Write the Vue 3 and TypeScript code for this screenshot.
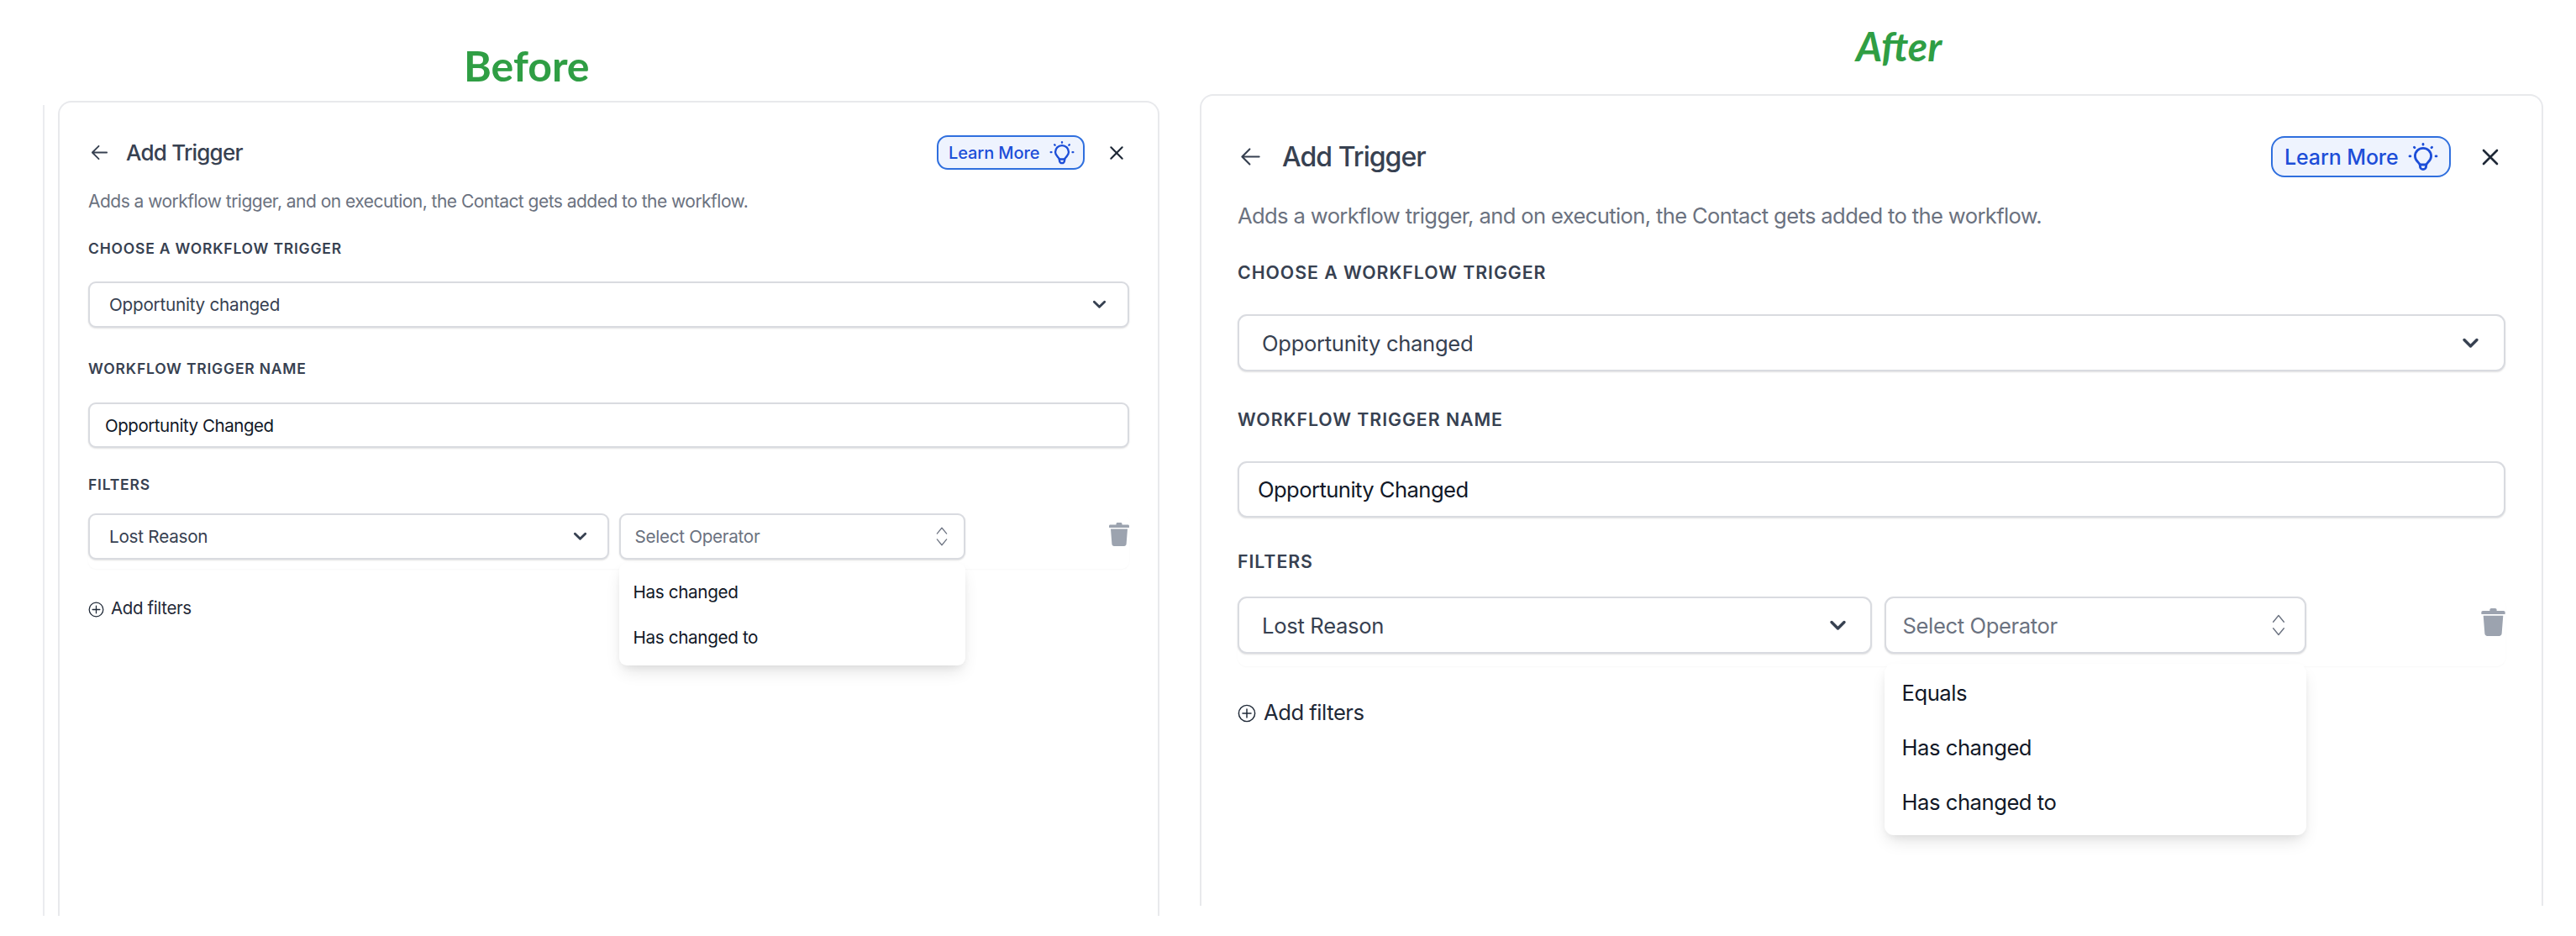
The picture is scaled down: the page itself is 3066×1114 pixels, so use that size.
<script setup lang="ts">
interface Panel {
  key: string
  heading: string
  operators: string[]
}

const panels: Panel[] = [
  { key: 'before', heading: 'Before', operators: ['Has changed', 'Has changed to'] },
  { key: 'after', heading: 'After', operators: ['Equals', 'Has changed', 'Has changed to'] },
]
</script>

<template>
  <div class="page">
    <div class="rail"></div>
    <section v-for="p in panels" :key="p.key" class="panel" :class="p.key">
      <h2 class="heading">{{ p.heading }}</h2>
      <div class="card">
        <header class="top">
          <svg class="back" viewBox="0 0 24 24" fill="none" stroke="#374151" stroke-width="1.9" stroke-linecap="round" stroke-linejoin="round">
            <path d="M21 12H3.5M11 4l-8 8 8 8" />
          </svg>
          <h1 class="title">Add Trigger</h1>
          <button class="learn">
            <span>Learn More</span>
            <svg class="bulb" viewBox="0 0 32 32" fill="none" stroke="#1d4ed8" stroke-width="2.500" stroke-linecap="round" stroke-linejoin="round">
              <path d="M12.400 24c0-2.400-4.900-3.800-4.900-9a8.500 8.500 0 0 1 17 0c0 5.200-4.900 6.600-4.900 9z" />
              <path d="M12.800 24v1.800a3.200 3.200 0 0 0 6.400 0V24" />
              <path d="M16 2.200v.6M6.600 5.600l.5.5M25.400 5.600l-.5.5M1.800 15h.8M29.400 15h.8" />
            </svg>
          </button>
          <svg class="close" viewBox="0 0 24 24" fill="none" stroke="#1f2937" stroke-width="2.600" stroke-linecap="round">
            <path d="M4 4l16 16M20 4L4 20" />
          </svg>
        </header>

        <p class="desc">Adds a workflow trigger, and on execution, the Contact gets added to the workflow.</p>

        <div class="label l-choose">CHOOSE A WORKFLOW TRIGGER</div>
        <div class="field select-main">
          <span class="value">Opportunity changed</span>
          <svg class="chev" viewBox="0 0 20 20" fill="none" stroke="#374151" stroke-width="3" stroke-linecap="round" stroke-linejoin="round">
            <path d="M3.500 6.500L10 13l6.500-6.500" />
          </svg>
        </div>

        <div class="label l-name">WORKFLOW TRIGGER NAME</div>
        <div class="field input-main">Opportunity Changed</div>

        <div class="label l-filters">FILTERS</div>
        <div class="row">
          <div class="field sel-left">
            <span class="value">Lost Reason</span>
            <svg class="chev" viewBox="0 0 20 20" fill="none" stroke="#374151" stroke-width="3" stroke-linecap="round" stroke-linejoin="round">
              <path d="M3.500 6.500L10 13l6.500-6.500" />
            </svg>
          </div>
          <div class="op-wrap">
            <div class="field sel-op">
              <span class="placeholder">Select Operator</span>
              <svg class="updown" viewBox="0 0 14 22" fill="none" stroke="#6b7280" stroke-width="1.100" stroke-linecap="round" stroke-linejoin="round">
                <path d="M2 8l5-6 5 6M2 14l5 6 5-6" />
              </svg>
            </div>
            <ul class="menu">
              <li v-for="o in p.operators" :key="o">{{ o }}</li>
            </ul>
          </div>
          <svg class="trash" viewBox="0 0 24 28" fill="#9ca3af">
            <path d="M8.500 1.500C8.500.7 9.200 0 10 0h4c.8 0 1.500.7 1.500 1.500V2.500h7c.8 0 1.500.7 1.500 1.500v1.500c0 .3-.2.500-.5.500H.5C.2 6 0 5.800 0 5.500V4c0-.8.7-1.500 1.500-1.500h7z" />
            <path d="M2 7.500h20l-1.400 18c-.1 1.400-1.200 2.500-2.600 2.500H6c-1.400 0-2.500-1.100-2.600-2.500z" />
          </svg>
        </div>

        <div class="add">
          <svg class="plus" viewBox="0 0 24 24" fill="none" stroke="#1f2937" stroke-width="1.600" stroke-linecap="round">
            <circle cx="12" cy="12" r="10.500" />
            <path d="M12 6.500v11M6.500 12h11" />
          </svg>
          <span>Add filters</span>
        </div>
      </div>
    </section>
  </div>
</template>

<style>
html,
body {
  margin: 0;
  background: #fff;
  overflow: hidden;
}
</style>

<style scoped>
.page {
  display: flex;
  align-items: flex-start;
  width: 3066px;
  height: 1114px;
  padding-left: 51px;
  box-sizing: border-box;
  font-family: Inter, "Liberation Sans", sans-serif;
  overflow: hidden;
}
.rail {
  width: 2px;
  height: 965px;
  margin: 125px 16px 0 0;
  background: #ebecef;
  flex: none;
}
.panel {
  flex: none;
}
.panel.before {
  width: 1311px;
  margin-right: 48px;
  --head-h: 120px;
  --head-pad: 483px;
  --head-size: 50px;
  --card-h: 970px;
  --pad-x: 34px;
  --pad-t: 39px;
  --btn-h: 41px;
  --btn-w: 176px;
  --btn-size: 20px;
  --btn-pl: 12px;
  --btn-pr: 10px;
  --bulb: 30px;
  --btn-r: 13px;
  --back: 23px;
  --title-gap: 20px;
  --title: 26px;
  --close: 20px;
  --close-gap: 28px;
  --close-end: 5px;
  --desc: 21px;
  --desc-lh: 30px;
  --desc-mt: 23px;
  --lab: 17.500px;
  --lab-lh: 20px;
  --m1: 31px;
  --m2: 29px;
  --m3: 39px;
  --m4: 30px;
  --m5: 34px;
  --m6: 24px;
  --fh: 55px;
  --ih: 54px;
  --val: 20.700px;
  --val-pad: 23px;
  --inp-pad: 18px;
  --inp: 20.500px;
  --chev: 19px;
  --chev-end: 24px;
  --op-gap: 12px;
  --ph-pad: 17px;
  --up-w: 16px;
  --up-h: 25px;
  --up-end: 18px;
  --row-pb: 11px;
  --trash-w: 24px;
  --trash-h: 28px;
  --trash-mt: 11px;
  --menu-top: 59px;
  --menu-pad-x: 17px;
  --menu-pt: 8px;
  --menu-pb: 6px;
  --item-h: 54px;
  --add-mt: 32px;
  --add-lh: 30px;
  --add: 20.500px;
  --plus: 19px;
  --add-gap: 8px;
  --radius: 9px;
}
.panel.after {
  width: 1599px;
  --head-h: 112px;
  --head-pad: 781px;
  --head-size: 48px;
  --card-h: 966px;
  --pad-x: 43px;
  --pad-t: 48px;
  --btn-h: 49px;
  --btn-w: 214px;
  --btn-size: 25px;
  --btn-pl: 14px;
  --btn-pr: 13px;
  --bulb: 36px;
  --btn-r: 16px;
  --back: 27px;
  --title-gap: 24px;
  --title: 32px;
  --close: 24px;
  --close-gap: 35px;
  --close-end: 6px;
  --desc: 25.600px;
  --desc-lh: 34px;
  --desc-mt: 29px;
  --lab: 21.300px;
  --lab-lh: 24px;
  --m1: 38px;
  --m2: 38px;
  --m3: 45px;
  --m4: 38px;
  --m5: 40px;
  --m6: 30px;
  --fh: 68px;
  --ih: 67px;
  --val: 25.600px;
  --val-pad: 27px;
  --inp-pad: 22px;
  --inp: 25.600px;
  --chev: 23px;
  --chev-end: 28px;
  --op-gap: 15px;
  --ph-pad: 20px;
  --up-w: 18px;
  --up-h: 28px;
  --up-end: 22px;
  --row-pb: 15px;
  --trash-w: 29px;
  --trash-h: 33px;
  --trash-mt: 14px;
  --menu-top: 80px;
  --menu-pad-x: 21px;
  --menu-pt: 2px;
  --menu-pb: 7px;
  --item-h: 65px;
  --add-mt: 38px;
  --add-lh: 34px;
  --add: 25.600px;
  --plus: 22px;
  --add-gap: 9px;
  --radius: 11px;
}
.heading {
  height: var(--head-h);
  margin: 0;
  box-sizing: border-box;
  padding-left: var(--head-pad);
  font-family: Lato, sans-serif;
  font-weight: 700;
  font-size: var(--head-size);
  color: #2f9e44;
}
.before .heading {
  padding-top: 55px;
  line-height: 46px;
}
.after .heading {
  padding-top: 32px;
  line-height: 46px;
  font-style: italic;
}
.card {
  box-sizing: border-box;
  height: var(--card-h);
  border: 2px solid #e8e9ec;
  border-bottom: 0;
  border-radius: 16px 16px 0 0;
  padding: var(--pad-t) var(--pad-x) 0;
}
.top {
  display: flex;
  align-items: center;
  height: var(--btn-h);
}
.back {
  width: var(--back);
  height: var(--back);
  flex: none;
  margin-left: 2px;
}
.title {
  margin: 0 auto 0 var(--title-gap);
  font-size: var(--title);
  font-weight: 500;
  letter-spacing: -0.03em;
  color: #374151;
}
.learn {
  box-sizing: border-box;
  display: flex;
  align-items: center;
  justify-content: space-between;
  width: var(--btn-w);
  height: var(--btn-h);
  padding: 0 var(--btn-pr) 0 var(--btn-pl);
  border: 2px solid #2f6fde;
  border-radius: var(--btn-r);
  background: #eef3fe;
  color: #1d4ed8;
  font: 500 var(--btn-size) Inter, sans-serif;
  letter-spacing: -0.005em;
}
.bulb {
  width: var(--bulb);
  height: var(--bulb);
  flex: none;
}
.close {
  width: var(--close);
  height: var(--close);
  margin: 0 var(--close-end) 0 var(--close-gap);
  flex: none;
}
.desc {
  margin: var(--desc-mt) 0 0;
  font-size: var(--desc);
  line-height: var(--desc-lh);
  letter-spacing: -0.025em;
  color: #6b7280;
}
.label {
  font-size: var(--lab);
  line-height: var(--lab-lh);
  font-weight: 600;
  letter-spacing: 0.045em;
  color: #374151;
}
.l-choose {
  margin-top: var(--m1);
}
.l-name {
  margin-top: var(--m3);
}
.l-filters {
  margin-top: var(--m5);
}
.field {
  box-sizing: border-box;
  display: flex;
  align-items: center;
  background: #fff;
  border: 2px solid #d9dbe0;
  border-radius: var(--radius);
  box-shadow: 0 1px 2px rgba(0, 0, 0, 0.12);
}
.select-main {
  margin-top: var(--m2);
  height: var(--fh);
  padding: 0 var(--chev-end) 0 var(--val-pad);
  justify-content: space-between;
}
.input-main {
  margin-top: var(--m4);
  height: var(--ih);
  padding-left: var(--inp-pad);
  font-size: var(--inp);
  letter-spacing: -0.022em;
  color: #111827;
}
.value {
  font-size: var(--val);
  letter-spacing: -0.012em;
  color: #374151;
}
.chev {
  width: var(--chev);
  height: var(--chev);
  flex: none;
}
.row {
  display: flex;
  align-items: flex-start;
  margin-top: var(--m6);
  padding-bottom: var(--row-pb);
  gap: var(--op-gap);
  border-radius: var(--radius);
  box-shadow: 0 1px 2px rgba(0, 0, 0, 0.03);
}
.sel-left {
  width: 50%;
  height: var(--fh);
  padding: 0 calc(var(--chev-end) - 1px) 0 var(--val-pad);
  justify-content: space-between;
}
.op-wrap {
  position: relative;
  width: 33.300%;
}
.sel-op {
  height: var(--fh);
  padding: 0 var(--up-end) 0 var(--ph-pad);
  justify-content: space-between;
}
.placeholder {
  font-size: var(--val);
  letter-spacing: -0.015em;
  color: #6b7280;
}
.updown {
  width: var(--up-w);
  height: var(--up-h);
  flex: none;
}
.menu {
  position: absolute;
  z-index: 2;
  left: 0;
  right: 0;
  top: var(--menu-top);
  margin: 0;
  padding: var(--menu-pt) 0 var(--menu-pb);
  list-style: none;
  background: #fff;
  border-radius: var(--radius);
  box-shadow: 0 10px 20px -4px rgba(0, 0, 0, 0.12), 0 4px 8px -2px rgba(0, 0, 0, 0.06);
}
.menu li {
  height: var(--item-h);
  line-height: var(--item-h);
  padding-left: var(--menu-pad-x);
  font-size: var(--val);
  letter-spacing: -0.018em;
  color: #111827;
}
.trash {
  width: var(--trash-w);
  height: var(--trash-h);
  margin-left: auto;
  margin-top: var(--trash-mt);
  flex: none;
}
.add {
  display: flex;
  align-items: center;
  gap: var(--add-gap);
  margin-top: var(--add-mt);
  line-height: var(--add-lh);
  font-size: var(--add);
  letter-spacing: -0.018em;
  color: #1f2937;
}
.plus {
  width: var(--plus);
  height: var(--plus);
  flex: none;
  margin-top: 2px;
}
</style>
